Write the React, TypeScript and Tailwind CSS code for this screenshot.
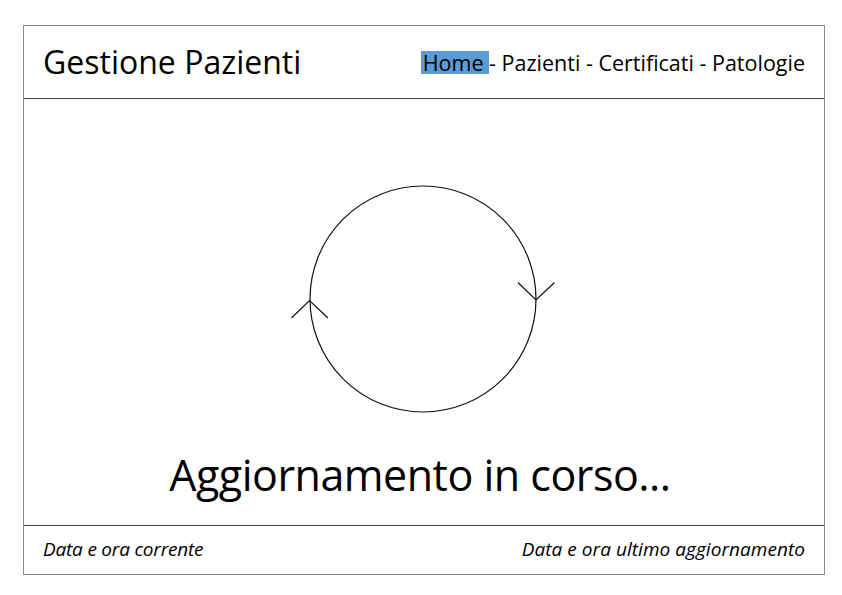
import React from 'react';

const font = "font-['Open_Sans','Noto_Sans',sans-serif]";

const Spinner: React.FC = () => (
  <svg
    width={270}
    height={240}
    viewBox="287.5 179 270 240"
    className="block flex-none"
    fill="none"
    stroke="#111"
    strokeWidth={1.2}
  >
    <circle cx={422.5} cy={299} r={113} />
    <polyline points="291,318 309,300.5 327.5,318" />
    <polyline points="517.5,282.5 535.5,300 554,282.5" />
  </svg>
);

const App: React.FC = () => {
  return (
    <div className={`w-[842px] h-[595px] bg-white overflow-hidden ${font} text-black`}>
      <div className="ml-[23px] mt-[25px] w-[802px] h-[550px] border border-[#888] flex flex-col">
        {/* header */}
        <header className="h-[73px] flex-none flex justify-between items-start px-[19px] border-b border-[#444]">
          <h1 className="mt-[20px] text-[32px] leading-[32px] font-normal">Gestione Pazienti</h1>
          <nav className="mt-[25px] text-[21.5px] leading-[23px] whitespace-pre">
            <span className="inline-block h-[23px] bg-[#5b9bd5] pl-[2px]">Home </span>
            - Pazienti - Certificati - Patologie
          </nav>
        </header>

        {/* main */}
        <main className="flex-1 flex flex-col items-center">
          <div className="mt-[80px] mr-[3px]">
            <Spinner />
          </div>
          <p className="mt-[34px] mr-[8px] text-[43px] leading-none tracking-[-0.5px]">
            Aggiornamento in corso...
          </p>
        </main>

        {/* footer */}
        <footer className="h-[49px] flex-none flex justify-between items-start px-[19px] border-t border-[#444] italic text-[19px] leading-none">
          <span className="mt-[14px] tracking-[-0.2px]">Data e ora corrente</span>
          <span className="mt-[14px] tracking-[0.05px]">Data e ora ultimo aggiornamento</span>
        </footer>
      </div>
    </div>
  );
};

export default App;
